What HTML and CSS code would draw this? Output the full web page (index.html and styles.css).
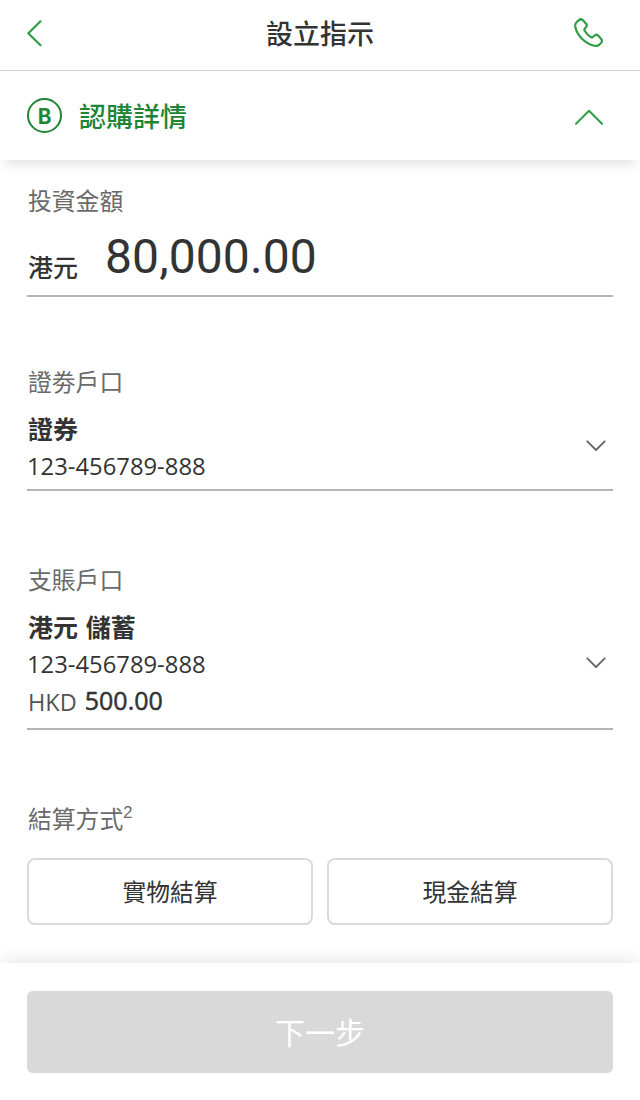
FILE: index.html
```html
<!DOCTYPE html>
<html lang="zh-Hant">
<head>
    <meta charset="UTF-8">
    <meta name="viewport" content="width=device-width, initial-scale=1.0">
    <title>設立指示</title>
    <link rel="stylesheet" href="styles.css">
</head>
<body>
    <div class="screen">
        <header class="navbar">
            <svg class="icon-back" width="18" height="28" viewBox="0 0 18 28">
                <path d="M14.5 2.3 L2.3 14.3 L14.5 26.3" />
            </svg>
            <h1>設立指示</h1>
            <svg class="icon-phone" width="32" height="32" viewBox="0 0 32 32">
                <path d="M3.4 5.5 L5.9 3.1 Q7.9 1.4 9.8 3.1 L13.3 6.9 Q14.4 8.4 13.2 9.9 L11.6 12 Q11 13 11.8 14 C13.6 16.8 15.7 18.9 18.1 20.3 Q19 20.8 19.8 20 L21.8 18.3 Q23.3 17 24.9 18.3 L28.2 22 Q29.7 23.9 28.2 25.8 L26 28 Q24 29.4 21.3 28.7 C11.8 26.3 4.2 18.6 2.3 10 Q1.8 7.2 3.4 5.5 Z" />
            </svg>
        </header>

        <div class="section-head">
            <span class="step">B</span>
            <h2>認購詳情</h2>
            <svg class="icon-up" width="30" height="18" viewBox="0 0 30 18">
                <path d="M2 15.8 L15 2.8 L28 15.8" />
            </svg>
        </div>

        <main class="form">
            <div class="field amount">
                <div class="label">投資金額</div>
                <div class="amount-row">
                    <span class="currency">港元</span>
                    <span class="amount-value">80,000.00</span>
                </div>
            </div>

            <div class="field securities">
                <div class="label">證劵戶口</div>
                <div class="select">
                    <div>
                        <div class="account-name">證券</div>
                        <div class="account-number">123-456789-888</div>
                    </div>
                    <svg class="icon-down" width="22" height="14" viewBox="0 0 22 14">
                        <path d="M2.3 2.3 L11 11 L19.7 2.3" />
                    </svg>
                </div>
            </div>

            <div class="field debit">
                <div class="label">支賬戶口</div>
                <div class="select">
                    <div>
                        <div class="account-name">港元 儲蓄</div>
                        <div class="account-number">123-456789-888</div>
                        <div class="balance">
                            <span class="code">HKD</span>
                            <span class="balance-value">500.00</span>
                        </div>
                    </div>
                    <svg class="icon-down" width="22" height="14" viewBox="0 0 22 14">
                        <path d="M2.3 2.3 L11 11 L19.7 2.3" />
                    </svg>
                </div>
            </div>

            <div class="settlement">
                <div class="label">結算方式<sup>2</sup></div>
                <div class="options">
                    <button class="option">實物結算</button>
                    <button class="option">現金結算</button>
                </div>
            </div>
        </main>

        <footer class="footer">
            <button class="next" disabled>下一步</button>
        </footer>
    </div>
</body>
</html>
```
FILE: styles.css
```css
:root {
    --green: #1f8535;
    --green-light: #2f9e44;
    --text: #333;
    --label: #6a6a6a;
    --line: #b4b4b4;
}

* {
    box-sizing: border-box;
}

body {
    margin: 0;
    font-family: "Noto Sans CJK TC", sans-serif;
    background: #fff;
    color: var(--text);
}

h1, h2 {
    margin: 0;
    font-size: 27px;
    font-weight: 500;
    line-height: 40px;
}

button {
    font-family: inherit;
    padding: 0;
}

svg {
    display: block;
    fill: none;
    stroke-linecap: round;
    stroke-linejoin: round;
}

.screen {
    display: flex;
    flex-direction: column;
    height: 1100px;
    overflow: hidden;
}

.navbar {
    display: grid;
    grid-template-columns: 1fr auto 1fr;
    align-items: center;
    height: 71px;
    padding: 0 35px 5px 26px;
    border-bottom: 1px solid #cfcfcf;
}

.navbar h1 {
    padding-left: 9px;
}

.icon-back {
    stroke: var(--green-light);
    stroke-width: 2.2;
}

.icon-phone {
    justify-self: end;
    stroke: var(--green-light);
    stroke-width: 2.2;
}

.section-head {
    display: flex;
    align-items: center;
    height: 89px;
    padding: 0 36px 0 27px;
    background: #fff;
    box-shadow: 0 10px 12px -6px rgba(0, 0, 0, 0.12);
}

.section-head h2 {
    margin-left: 17px;
    color: var(--green);
}

.step {
    width: 35px;
    height: 35px;
    border: 2px solid var(--green);
    border-radius: 50%;
    color: var(--green);
    font-size: 21px;
    font-weight: 700;
    line-height: 30px;
    text-align: center;
}

.icon-up {
    margin: 2px 0 0 auto;
    stroke: var(--green-light);
    stroke-width: 2;
}

.form {
    flex: 1;
    padding: 24px 27px 0;
}

.label {
    padding-left: 1px;
    font-size: 23.8px;
    line-height: 32px;
    color: var(--label);
}

.label sup {
    font-family: "Liberation Sans", sans-serif;
    font-size: 16.5px;
    line-height: 0;
    vertical-align: 10px;
}

.field {
    border-bottom: 2px solid var(--line);
}

.amount {
    height: 113px;
}

.amount-row {
    display: flex;
    align-items: flex-end;
    gap: 27px;
    padding-left: 1px;
}

.currency {
    padding-bottom: 14px;
    font-size: 25px;
    font-weight: 500;
    line-height: 36px;
}

.amount-value {
    font-family: Roboto, sans-serif;
    font-size: 48px;
    letter-spacing: 0.1px;
    line-height: 82px;
}

.securities {
    height: 126px;
    margin-top: 68px;
}

.debit {
    height: 167px;
    margin-top: 72px;
}

.select {
    display: flex;
    align-items: center;
    justify-content: space-between;
    padding: 12px 6px 0 0;
}

.account-name {
    padding-left: 1px;
    font-size: 25px;
    font-weight: 700;
    line-height: 38px;
    word-spacing: 2px;
}

.account-number {
    padding-top: 1px;
    font-family: "Open Sans", sans-serif;
    font-size: 23.8px;
    line-height: 36px;
}

.balance {
    display: flex;
    align-items: flex-end;
    gap: 8px;
    padding-left: 1px;
    font-family: "Open Sans", sans-serif;
}

.code {
    font-size: 23.5px;
    line-height: 32px;
    color: #555;
}

.balance-value {
    font-size: 25px;
    font-weight: 500;
    line-height: 36px;
    -webkit-text-stroke: 0.5px var(--text);
}

.icon-down {
    stroke: #666;
    stroke-width: 1.8;
}

.securities .icon-down {
    margin-bottom: 2px;
}

.settlement {
    margin-top: 72px;
}

.options {
    display: grid;
    grid-template-columns: 1fr 1fr;
    gap: 14px;
    margin-top: 24px;
}

.option {
    height: 67px;
    padding-bottom: 2px;
    border: 2px solid #dadada;
    border-radius: 8px;
    background: #fff;
    color: var(--text);
    font-size: 23.8px;
}

.footer {
    height: 137px;
    padding: 28px 27px 0;
    background: #fff;
    box-shadow: 0 -10px 14px -4px rgba(0, 0, 0, 0.08);
}

.next {
    width: 100%;
    height: 82px;
    padding-bottom: 2px;
    border: none;
    border-radius: 6px;
    background: #d9d9d9;
    color: #fff;
    font-size: 30px;
}
```
